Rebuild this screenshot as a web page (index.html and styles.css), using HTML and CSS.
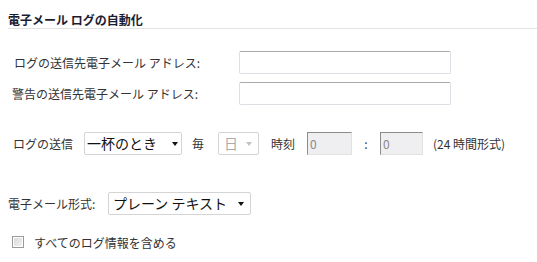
FILE: index.html
```html
<!DOCTYPE html>
<html lang="ja">

<head>
  <meta charset="UTF-8">
  <meta name="viewport" content="width=device-width, initial-scale=1.0">
  <title>電子メール ログの自動化</title>
  <link rel="stylesheet" href="styles.css">
</head>

<body>
  <div id="whole">
    <h2 class="section-title">電子メール ログの自動化</h2>

    <form id="logForm">
      <div class="addr-row">
        <label for="logAddr" class="addr-label first">ログの送信先電子メール アドレス:</label>
        <input type="text" id="logAddr" class="text-box">
      </div>
      <div class="addr-row">
        <label for="alertAddr" class="addr-label">警告の送信先電子メール アドレス:</label>
        <input type="text" id="alertAddr" class="text-box">
      </div>

      <div class="send-row">
        <label for="sendWhen" class="send-label">ログの送信</label>
        <div class="select-wrap when">
          <select id="sendWhen">
            <option>一杯のとき</option>
          </select>
        </div>
        <span class="every">毎</span>
        <div class="select-wrap day disabled">
          <select id="sendDay" disabled>
            <option>日</option>
          </select>
        </div>
        <span class="time-label">時刻</span>
        <input type="text" class="time-box hour" value="0" disabled>
        <span class="colon">:</span>
        <input type="text" class="time-box minute" value="0" disabled>
        <span class="time-hint">(24 時間形式)</span>
      </div>

      <div class="format-row">
        <label for="format" class="format-label">電子メール形式:</label>
        <div class="select-wrap format">
          <select id="format">
            <option>プレーン テキスト</option>
          </select>
        </div>
      </div>

      <div class="check-row">
        <input type="checkbox" id="includeAll" class="check">
        <label for="includeAll">すべてのログ情報を含める</label>
      </div>
    </form>
  </div>
</body>

</html>
```

FILE: styles.css
```css
body {
  font-family: "Noto Sans CJK JP", "Noto Sans", sans-serif;
  font-size: 12px;
  color: #333;
  margin: 0;
  padding: 12px 0 0 8px;
  background-color: #fff;
}

.section-title {
  font-size: 12px;
  font-weight: bold;
  line-height: 16px;
  color: #1c1c30;
  margin: 0;
  border-bottom: 1px solid #e2e2e2;
}

#logForm {
  padding-top: 22px;
}

.addr-row {
  display: flex;
  align-items: center;
  height: 23px;
  margin-bottom: 8px;
}

.addr-label {
  width: 231px;
  padding-left: 4px;
  box-sizing: border-box;
}

.addr-label.first {
  padding-left: 6px;
}

.text-box {
  width: 212px;
  height: 23px;
  box-sizing: border-box;
  border: 1px solid #dcdfe4;
  border-top-color: #a9a9a9;
  border-radius: 2px;
  padding: 2px 4px;
  font: inherit;
}

.send-row {
  display: flex;
  align-items: center;
  height: 23px;
  margin-top: 27px;
}

.send-label {
  padding-left: 5px;
  width: 76px;
  box-sizing: border-box;
}

.select-wrap {
  position: relative;
  height: 23px;
}

.select-wrap select {
  appearance: none;
  -webkit-appearance: none;
  width: 100%;
  height: 23px;
  box-sizing: border-box;
  border: 1px solid #d4d4d4;
  border-radius: 2px;
  background: #fff;
  font-family: inherit;
  font-size: 14px;
  color: #111;
  padding: 0 0 1px 2px;
  line-height: 20px;
}

.select-wrap::after {
  content: "";
  position: absolute;
  top: 10px;
  right: 5px;
  border-left: 3px solid transparent;
  border-right: 3px solid transparent;
  border-top: 4px solid #111;
  pointer-events: none;
}

.select-wrap.when {
  width: 98px;
}

.select-wrap.when::after {
  right: 4px;
}

.every {
  margin-left: 10px;
  width: 26px;
}

.select-wrap.day {
  width: 41px;
}

.select-wrap.disabled select {
  border-color: #c4c4c4;
  color: #888;
  padding-left: 5px;
}

.select-wrap.disabled::after {
  border-top-color: #c2c2c2;
  right: 7px;
}

.time-label {
  margin-left: 12px;
  width: 36px;
}

.time-box {
  width: 45px;
  height: 23px;
  box-sizing: border-box;
  border: 1px solid #e2e2e2;
  border-top-color: #8c8c8c;
  border-left-color: #8c8c8c;
  background: #efeff2;
  color: #8a8a8a;
  font-family: inherit;
  font-size: 12px;
  padding: 0 2px;
}

.time-box.minute {
  width: 43px;
}

.colon {
  width: 28px;
  text-align: center;
}

.time-hint {
  margin-left: 10px;
}

.format-row {
  display: flex;
  align-items: center;
  height: 23px;
  margin-top: 37px;
}

.format-label {
  width: 100px;
}

.select-wrap.format {
  width: 143px;
}

.select-wrap.format select {
  padding-left: 4px;
}

.select-wrap.format::after {
  right: 7px;
}

.check-row {
  display: flex;
  align-items: center;
  margin-top: 19px;
  padding-left: 4px;
  height: 16px;
}

.check {
  appearance: none;
  -webkit-appearance: none;
  width: 12px;
  height: 12px;
  margin: 0 10px 0 0;
  border: 1px solid #9a9a9a;
  background: linear-gradient(135deg, #d8d8d8, #f4f4f4);
  box-shadow: inset 0 0 0 1px #fff;
}
```
